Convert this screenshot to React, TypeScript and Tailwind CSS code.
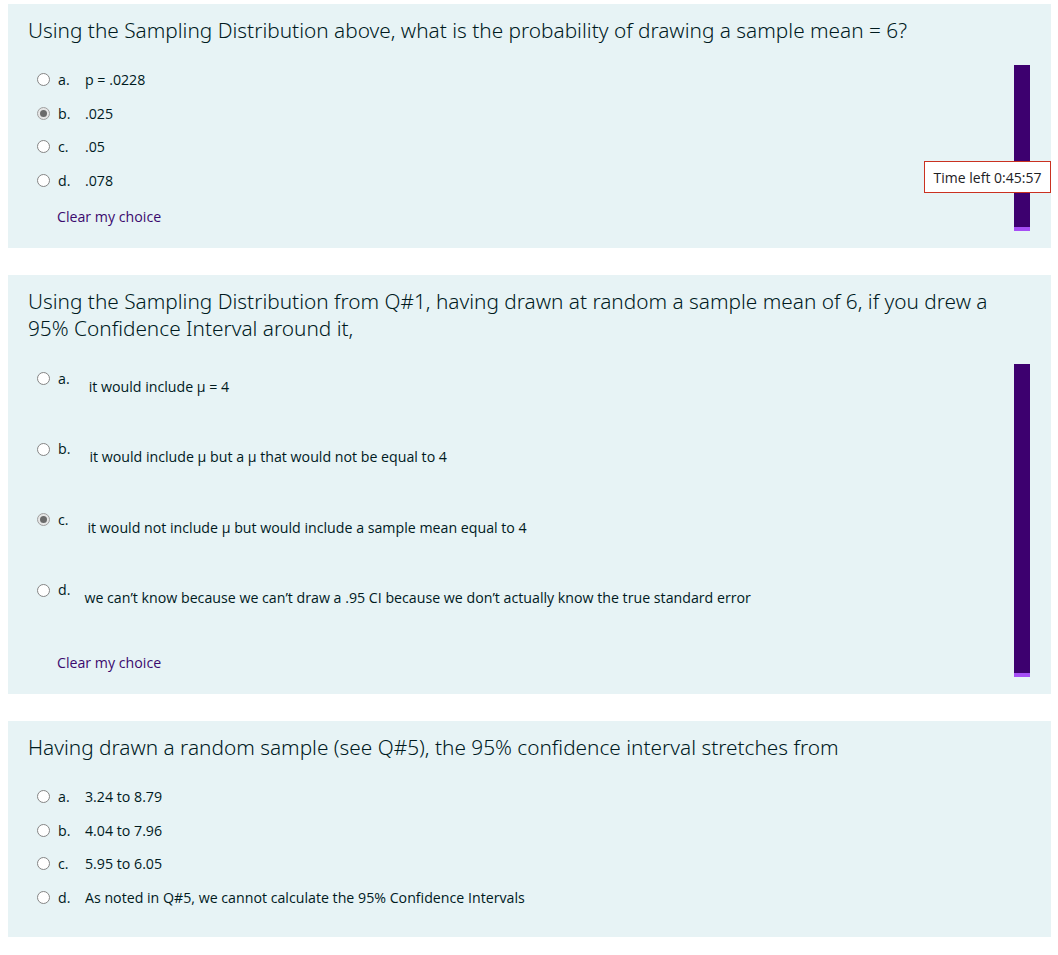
import React from 'react';

const bodyFont = { fontFamily: '"Open Sans", "Noto Sans", sans-serif' };
const lightFont = { fontFamily: '"Noto Sans", "Open Sans", sans-serif', fontWeight: 300 };

type Option = { letter: string; text: string; checked?: boolean; textIndent?: string };

function Radio({ checked }: { checked?: boolean }) {
  return checked ? (
    <span className="flex h-[13px] w-[13px] shrink-0 items-center justify-center rounded-full border border-[#a0a0a0] bg-[#e6e6e6]">
      <span className="h-[7px] w-[7px] rounded-full bg-[#6b6b6b]" />
    </span>
  ) : (
    <span className="h-[13px] w-[13px] shrink-0 rounded-full border border-[#858585] bg-white" />
  );
}

function ShortRow({ opt }: { opt: Option }) {
  return (
    <div className="flex h-[33.5px] items-center">
      <Radio checked={opt.checked} />
      <span className="ml-[8px] w-[27px] shrink-0">{opt.letter}</span>
      <span>{opt.text}</span>
    </div>
  );
}

function TallRow({ opt }: { opt: Option }) {
  return (
    <div className="flex h-[70.5px] items-start">
      <div className="flex h-[33.5px] items-center">
        <Radio checked={opt.checked} />
        <span className="ml-[8px] shrink-0">{opt.letter}</span>
      </div>
      <span className={`${opt.textIndent ?? 'ml-[19px]'} mt-[8px] leading-[33.5px]`}>{opt.text}</span>
    </div>
  );
}

function ClearChoice() {
  return (
    <div className="mt-[2.5px] flex h-[33.5px] items-center pl-[20px] text-[#3b0a6e]">
      Clear my choice
    </div>
  );
}

function Bar() {
  return (
    <div className="mb-[17px] mr-[21px] mt-[2px] flex w-[16px] shrink-0 flex-col self-stretch">
      <div className="flex-1 bg-[#3d006f]" />
      <div className="h-[4px] bg-[#a64ef5]" />
    </div>
  );
}

function QuestionText({ children }: { children: React.ReactNode }) {
  return (
    <div className="pl-[20px] pr-[40px] pt-[13px] text-[20.8px] leading-[27px] text-[#001a1e]" style={lightFont}>
      {children}
    </div>
  );
}

const q1: Option[] = [
  { letter: 'a.', text: 'p = .0228' },
  { letter: 'b.', text: '.025', checked: true },
  { letter: 'c.', text: '.05' },
  { letter: 'd.', text: '.078' },
];

const q2: Option[] = [
  { letter: 'a.', text: 'it would include μ = 4' },
  { letter: 'b.', text: 'it would include μ but  a μ  that would not be equal to 4' },
  { letter: 'c.', text: 'it would not include μ but would include a sample mean equal to 4', checked: true },
  { letter: 'd.', text: 'we can’t know because we can’t draw a .95 CI because we don’t actually know the true standard error', textIndent: 'ml-[14px]' },
];

const q3: Option[] = [
  { letter: 'a.', text: '3.24 to 8.79' },
  { letter: 'b.', text: '4.04 to 7.96' },
  { letter: 'c.', text: '5.95 to 6.05' },
  { letter: 'd.', text: 'As noted in Q#5, we cannot calculate the 95% Confidence Intervals' },
];

export default function App() {
  return (
    <div className="min-h-screen bg-white pt-[4px] text-[14.2px] text-[#001a1e]" style={bodyFont}>
      {/* Question 1 */}
      <section className="relative ml-[8px] flex h-[244px] w-[1043px] flex-col bg-[#e7f3f5]">
        <QuestionText>Using the Sampling Distribution above, what is the probability of drawing a sample mean = 6?</QuestionText>
        <div className="mt-[19px] flex flex-1">
          <div className="flex-1 pl-[29px]">
            {q1.map((o) => (
              <ShortRow key={o.letter} opt={o} />
            ))}
            <ClearChoice />
          </div>
          <Bar />
        </div>
        <div className="absolute right-0 top-[157px] flex h-[32px] w-[127px] items-center justify-center border border-[#ca3120] bg-white text-[14px] text-[#1d2125]">
          Time left 0:45:57
        </div>
      </section>

      {/* Question 2 */}
      <section className="ml-[8px] mt-[27px] flex h-[419px] w-[1043px] flex-col bg-[#e7f3f5]">
        <QuestionText>
          Using the Sampling Distribution from Q#1, having drawn at random a sample mean of 6, if you drew a 95% Confidence Interval around it,
        </QuestionText>
        <div className="mt-[19.75px] flex flex-1">
          <div className="flex-1 pl-[29px]">
            {q2.map((o) => (
              <TallRow key={o.letter} opt={o} />
            ))}
            <ClearChoice />
          </div>
          <Bar />
        </div>
      </section>

      {/* Question 3 */}
      <section className="ml-[8px] mt-[27px] h-[216px] w-[1043px] bg-[#e7f3f5]">
        <QuestionText>Having drawn a random sample (see Q#5), the 95% confidence interval stretches from</QuestionText>
        <div className="mt-[19px] pl-[29px]">
          {q3.map((o) => (
            <ShortRow key={o.letter} opt={o} />
          ))}
        </div>
      </section>
    </div>
  );
}
